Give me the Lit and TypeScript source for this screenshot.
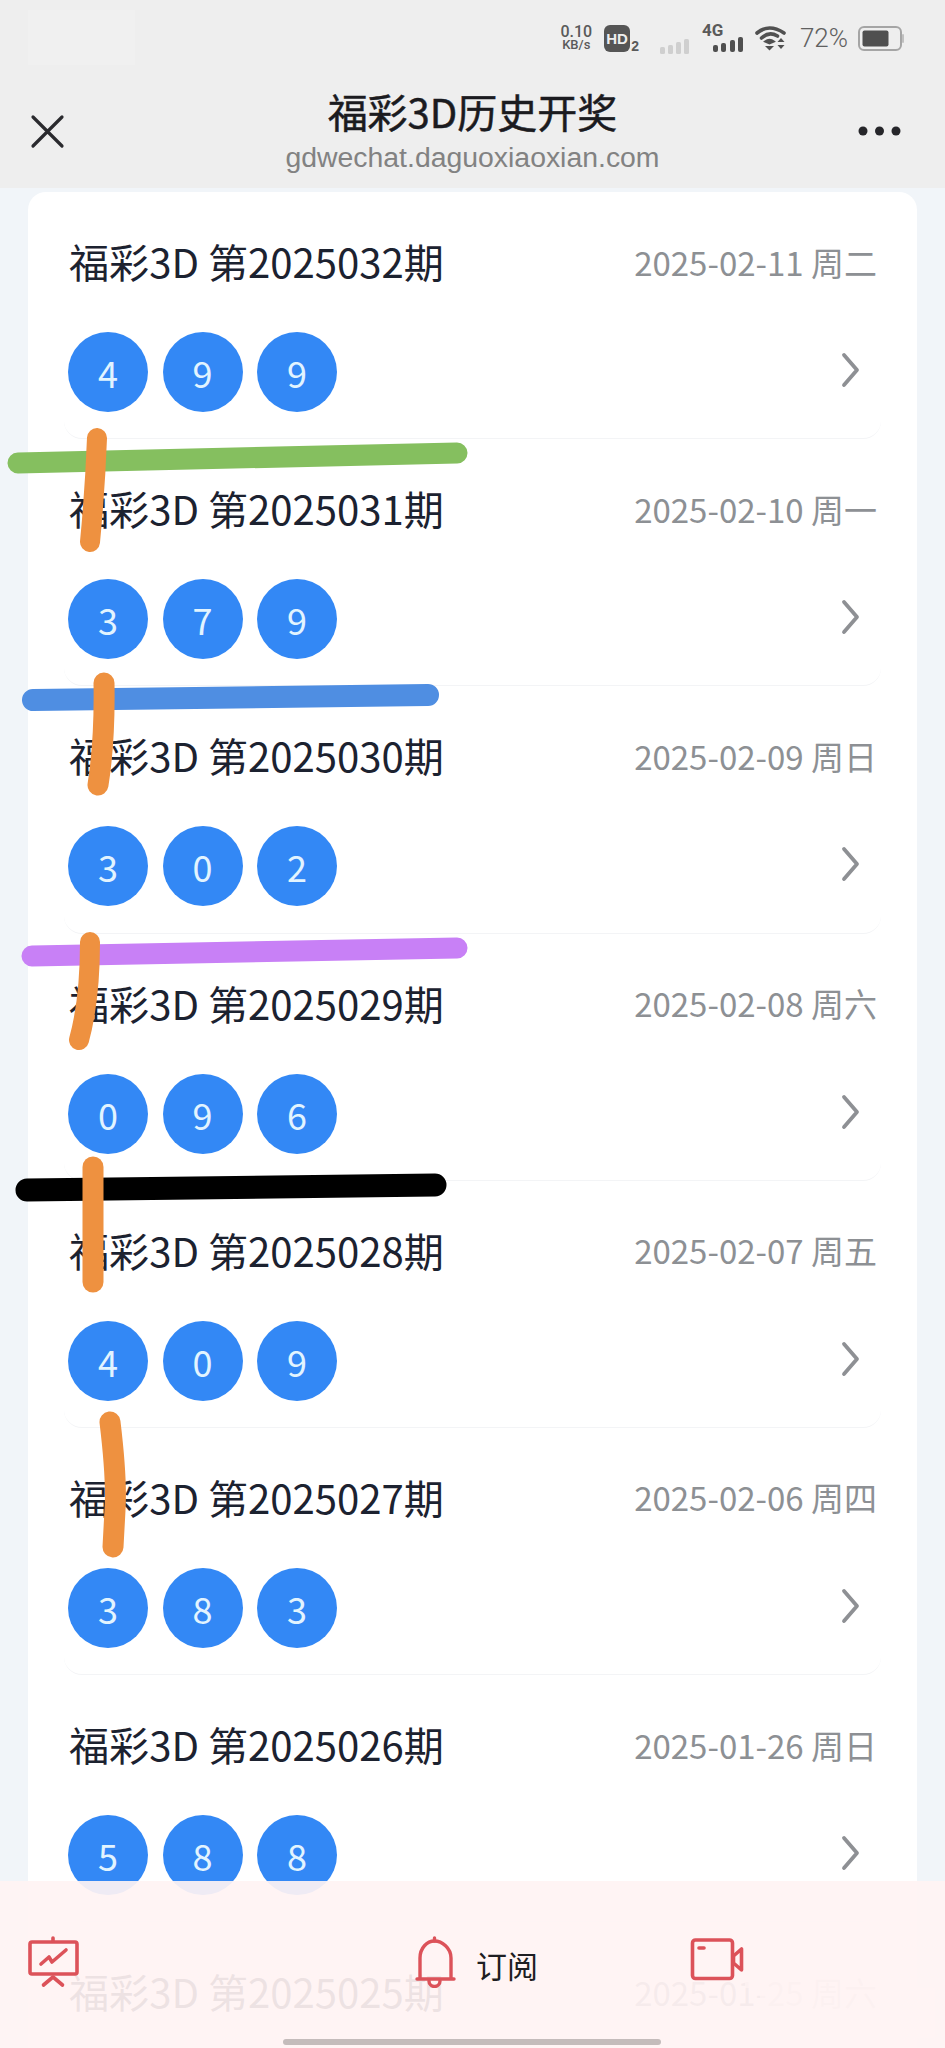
import { LitElement, html, css, svg } from "lit";
import { customElement } from "lit/decorators.js";

const ROWS = [
  { issue: "2025032", date: "2025-02-11 周二", balls: [4, 9, 9] },
  { issue: "2025031", date: "2025-02-10 周一", balls: [3, 7, 9] },
  { issue: "2025030", date: "2025-02-09 周日", balls: [3, 0, 2] },
  { issue: "2025029", date: "2025-02-08 周六", balls: [0, 9, 6] },
  { issue: "2025028", date: "2025-02-07 周五", balls: [4, 0, 9] },
  { issue: "2025027", date: "2025-02-06 周四", balls: [3, 8, 3] },
  { issue: "2025026", date: "2025-01-26 周日", balls: [5, 8, 8] },
  { issue: "2025025", date: "2025-01-25 周六", balls: [] as number[] },
];

const MARKS: { d: string; c: string; w: number }[] = [
  { d: "M18 463 L457 453", c: "#85bf5f", w: 21 },
  { d: "M97 438 Q95 490 90 542", c: "#ee9140", w: 20 },
  { d: "M33 700 L428 695", c: "#4f8ee2", w: 22 },
  { d: "M104 683 Q105 740 98 785", c: "#ee9140", w: 21 },
  { d: "M32 956 L457 948", c: "#c880f6", w: 21 },
  { d: "M90 942 Q90 1000 79 1040", c: "#ee9140", w: 20 },
  { d: "M27 1190 L435 1185", c: "#000000", w: 23 },
  { d: "M93 1167 L93 1282", c: "#ee9140", w: 21 },
  { d: "M110 1422 Q117 1480 115 1510 Q114 1530 113 1547", c: "#ee9140", w: 21 },
];

@customElement("app-root")
export class AppRoot extends LitElement {
  static styles = css`
    :host {
      display: block;
      position: relative;
      width: 945px;
      height: 2048px;
      overflow: hidden;
      background: #f1f5f9;
      font-family: "Noto Sans CJK SC", sans-serif;
      color: #1c2230;
    }
    .header {
      height: 188px;
      background: #eeeeee;
      display: flex;
      flex-direction: column;
      position: relative;
    }
    .status {
      height: 76px;
      display: flex;
      justify-content: flex-end;
      align-items: center;
      padding-right: 41px;
      color: #5a5a5a;
      font-family: "Liberation Sans", sans-serif;
      box-sizing: border-box;
    }
    .speed {
      display: flex;
      flex-direction: column;
      align-items: center;
      line-height: 14px;
      font-size: 16px;
      font-family: Roboto, sans-serif;
      font-weight: 500;
      margin-right: 12px;
    }
    .speed small { font-size: 13px; line-height: 12px; }
    .hd { display: flex; align-items: flex-end; margin-right: 21px; }
    .hd b {
      width: 26px;
      height: 27px;
      border-radius: 6px;
      background: #555555;
      color: #eeeeee;
      font-size: 15px;
      line-height: 27px;
      text-align: center;
      font-family: "Liberation Sans", sans-serif;
    }
    .hd i { font-style: normal; font-weight: 700; font-size: 14px; line-height: 12px; margin-left: 1px; }
    .bars { display: block; }
    .faded { margin-right: 12px; margin-top: 16px; }
    .net { position: relative; width: 42px; height: 27px; margin-right: 11px; }
    .net b { position: absolute; left: 0; top: -4px; font-size: 17px; line-height: 18px; font-family: Roboto, sans-serif; }
    .net svg { position: absolute; right: 0; bottom: 0; }
    .wifi { margin-right: 13px; }
    .pct { font-size: 26px; font-family: Roboto, sans-serif; font-weight: 300; margin-right: 10px; color: #606060; }
    .nav {
      position: relative;
      flex: 1;
      display: flex;
      flex-direction: column;
      align-items: center;
    }
    .title { font-size: 40px; line-height: 56px; margin-top: 7px; font-weight: 400; -webkit-text-stroke: 0.5px #1b1b1f; color: #1b1b1f; }
    .sub { font-family: "Liberation Sans", sans-serif; font-size: 28.4px; line-height: 32px; color: #828282; margin-top: 2px; }
    .close { position: absolute; left: 30px; top: 38px; }
    .more { position: absolute; left: 858px; top: 50px; }
    .ghost { position: absolute; left: 28px; top: 10px; width: 107px; height: 55px; background: #f0f0f0; }

    .card {
      margin: 4px 28px 0;
      background: #ffffff;
      border-radius: 18px 18px 0 0;
      padding: 0 36px;
    }
    .row {
      height: 247.2px;
      box-sizing: border-box;
      padding: 46px 4px 0;
      border-bottom: 1px solid #f3f4f6;
      border-radius: 18px;
    }
    .line { display: flex; justify-content: space-between; align-items: center; height: 48px; }
    .name { font-size: 40.1px; line-height: 46px; margin: -2px 0 0 1px; white-space: pre; }
    .date { font-size: 33px; line-height: 48px; color: #8d9094; margin-top: -1px; white-space: pre; }
    .lower { display: flex; align-items: center; justify-content: space-between; margin-top: 46px; min-height: 80px; }
    .balls { display: flex; gap: 14.5px; }
    .ball {
      width: 80px;
      height: 80px;
      border-radius: 50%;
      background: #3388f5;
      color: #e2f4ff;
      font-size: 36px;
      line-height: 80px;
      text-align: center;
    }
    .chev { margin: -4px 16px 0 0; display: block; }

    .marks { position: absolute; left: 0; top: 0; pointer-events: none; }

    .bar {
      position: absolute;
      left: 0;
      right: 0;
      top: 1881px;
      height: 167px;
      background: rgba(255, 243, 243, 0.92);
      display: grid;
      grid-template-columns: 386px 276px 1fr;
      align-items: start;
      padding: 55px 0 0 28px;
      box-sizing: border-box;
    }
    .sub-btn { display: flex; align-items: flex-start; }
    .sub-btn span { font-size: 31px; line-height: 36px; color: #1e1e22; margin: 11px 0 0 20px; }
    .bar svg { display: block; }
    .patch { position: absolute; background: rgba(255, 243, 243, 0.7); }
    .p1 { left: 745px; top: 60px; width: 160px; height: 47px; }
    .p2 { left: 760px; top: 107px; width: 175px; height: 50px; }
    .home {
      position: absolute;
      left: 283px;
      top: 158px;
      width: 378px;
      height: 6px;
      border-radius: 3px;
      background: #c4bcbb;
    }
  `;

  private chevron() {
    return html`<svg class="chev" width="20" height="36" viewBox="0 0 20 36" fill="none">
      <path d="M3 3 L16 18 L3 33" stroke="#8e9094" stroke-width="3.8" stroke-linecap="round" stroke-linejoin="round"/>
    </svg>`;
  }

  private statusBar() {
    return html`<div class="status">
      <div class="speed"><span>0.10</span><small>KB/s</small></div>
      <div class="hd"><b>HD</b><i>2</i></div>
      <svg class="bars faded" width="30" height="15" viewBox="0 0 30 15" fill="#cfcfcf">
        <rect x="0" y="8" width="5" height="7" rx="1.5"/><rect x="8" y="6" width="5" height="9" rx="1.5"/>
        <rect x="16" y="3" width="5" height="12" rx="1.5"/><rect x="24" y="0" width="5" height="15" rx="1.5"/>
      </svg>
      <div class="net">
        <b>4G</b>
        <svg width="31" height="15" viewBox="0 0 31 15" fill="#4f4f4f">
          <rect x="0" y="8" width="5" height="7" rx="2"/><rect x="8" y="6" width="5" height="9" rx="2"/>
          <rect x="17" y="3" width="5" height="12" rx="2"/><rect x="25" y="0" width="5" height="15" rx="2"/>
        </svg>
      </div>
      <svg class="wifi" width="32" height="26" viewBox="0 0 32 26" fill="none">
        <path d="M2 8 Q14 -2 29 8" stroke="#505050" stroke-width="3.6" stroke-linecap="round"/>
        <path d="M6.5 13 Q14 6 22.5 11" stroke="#505050" stroke-width="3.6" stroke-linecap="round"/>
        <path d="M10 16.5 Q14.5 13 19 16.5 L14.5 18.5 Z" stroke="#505050" stroke-width="2" fill="#505050"/>
        <path d="M10 21 H19 L14.5 25.5 Z" fill="#505050"/>
        <path d="M26 13 L29.5 17 H22.5 Z M26 24 L29.5 20 H22.5 Z" fill="#505050"/>
      </svg>
      <span class="pct">72%</span>
      <svg width="46" height="25" viewBox="0 0 46 25" fill="none">
        <rect x="1" y="1" width="42" height="23" rx="5" stroke="#a5a5a5" stroke-width="2"/>
        <rect x="4.5" y="4.5" width="26" height="16" rx="2" fill="#4f4f4f"/>
        <rect x="44" y="8" width="2" height="9" rx="1" fill="#c0c0c0"/>
      </svg>
    </div>`;
  }

  private bottomBar() {
    return html`<div class="bar">
      <div class="patch p1"></div>
      <div class="patch p2"></div>
      <svg width="52" height="52" viewBox="28 1936 52 52" fill="none" stroke="#dc5259" stroke-width="3.6" stroke-linecap="round" stroke-linejoin="round">
        <rect x="30" y="1942" width="47" height="32" rx="2"/>
        <path d="M53 1938 V1941"/>
        <path d="M43.5 1985 L53 1977 L62.5 1985"/>
        <path d="M41 1964 L49 1957 L52 1962 L66 1950"/>
      </svg>
      <div class="sub-btn">
        <svg width="42" height="52" viewBox="414 1936 42 52" fill="none" stroke="#dc5259" stroke-width="3.4" stroke-linecap="round" stroke-linejoin="round">
          <path d="M420 1978 V1958 C420 1948 427 1941 434.5 1941 C442 1941 451 1948 451 1958 V1978"/>
          <path d="M434.5 1938 V1941"/>
          <path d="M417 1979 H454"/>
          <path d="M429 1981 A5.5 5.5 0 0 0 440 1981"/>
        </svg>
        <span>订阅</span>
      </div>
      <svg width="54" height="46" viewBox="690 1938 54 46" fill="none" stroke="#dc5259" stroke-width="3.6" stroke-linecap="round" stroke-linejoin="round">
        <rect x="692.5" y="1942" width="40" height="38.5" rx="3"/>
        <path d="M699 1950 H704"/>
        <path d="M733.5 1958 L741.5 1951 V1972 L733.5 1965 Z"/>
      </svg>
      <div class="home"></div>
    </div>`;
  }

  render() {
    return html`
      <div class="header">
        <div class="ghost"></div>
        ${this.statusBar()}
        <div class="nav">
          <svg class="close" width="36" height="36" viewBox="0 0 36 36" fill="none">
            <path d="M3 3 L32 32 M32 3 L3 32" stroke="#2a2a2e" stroke-width="3.2" stroke-linecap="round"/>
          </svg>
          <svg class="more" width="44" height="10" viewBox="0 0 44 10" fill="#26262a">
            <circle cx="5" cy="5" r="4.5"/><circle cx="21.5" cy="5" r="4.5"/><circle cx="38" cy="5" r="4.5"/>
          </svg>
          <div class="title">福彩3D历史开奖</div>
          <div class="sub">gdwechat.daguoxiaoxian.com</div>
        </div>
      </div>
      <div class="card">
        ${ROWS.map(
          (r) => html`<div class="row">
            <div class="line">
              <span class="name">福彩3D 第${r.issue}期</span>
              <span class="date">${r.date}</span>
            </div>
            ${r.balls.length
              ? html`<div class="lower">
                  <div class="balls">${r.balls.map((b) => html`<div class="ball">${b}</div>`)}</div>
                  ${this.chevron()}
                </div>`
              : ""}
          </div>`
        )}
      </div>
      <svg class="marks" width="945" height="2048" viewBox="0 0 945 2048" fill="none">
        ${MARKS.map((m) => svg`<path d=${m.d} stroke=${m.c} stroke-width=${m.w} stroke-linecap="round"/>`)}
      </svg>
      ${this.bottomBar()}
    `;
  }
}
